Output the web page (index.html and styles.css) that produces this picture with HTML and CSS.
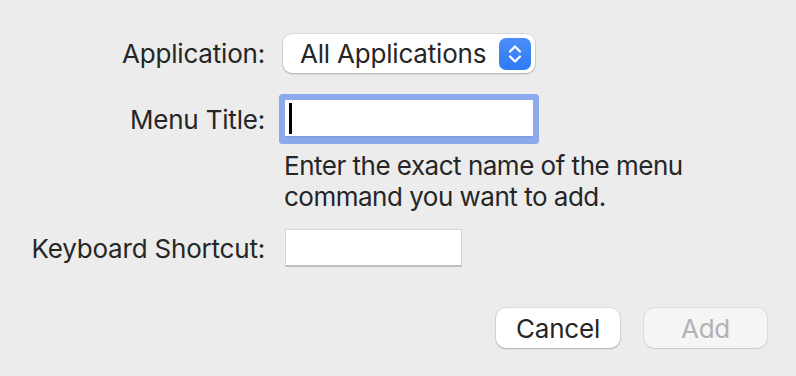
FILE: index.html
```html
<!DOCTYPE html>
<html>
<head>
<meta charset="utf-8">
<link rel="stylesheet" href="styles.css">
</head>
<body>
<div class="dialog">
  <div class="form">
    <div class="label row1">Application:</div>
    <div class="control row1">
      <div class="popup">
        <span class="popup-text">All Applications</span>
        <span class="stepper">
          <svg width="32" height="32" viewBox="0 0 32 32">
            <path d="M11 13.5 L16 8.5 L21 13.5" fill="none" stroke="#fff" stroke-width="2.2" stroke-linecap="round" stroke-linejoin="round"/>
            <path d="M11 18.5 L16 23.5 L21 18.5" fill="none" stroke="#fff" stroke-width="2.2" stroke-linecap="round" stroke-linejoin="round"/>
          </svg>
        </span>
      </div>
    </div>

    <div class="label row2">Menu Title:</div>
    <div class="control row2">
      <div class="field focused"><span class="caret"></span></div>
    </div>

    <div class="help">Enter the exact name of the menu<br>command you want to add.</div>

    <div class="label row3">Keyboard Shortcut:</div>
    <div class="control row3">
      <div class="field short"></div>
    </div>
  </div>
  <div class="buttons">
    <div class="btn">Cancel</div>
    <div class="btn disabled">Add</div>
  </div>
</div>
</body>
</html>
```

FILE: styles.css
```css
html, body {
  margin: 0;
  padding: 0;
  background: #ececec;
}
body {
  width: 796px;
  height: 376px;
  overflow: hidden;
  font-family: Inter, "Noto Sans", sans-serif;
  font-size: 26px;
  letter-spacing: -0.2px;
  color: #262626;
}
.dialog {
  padding-top: 34px;
}
.form {
  display: grid;
  grid-template-columns: 265px 1fr;
  column-gap: 18px;
  align-items: center;
}
.label {
  text-align: right;
  line-height: 31px;
  white-space: nowrap;
}
.control {
  display: flex;
}
.row2 { margin-top: 27px; }
.row3 { margin-top: 17px; }
.popup {
  width: 252px;
  height: 39px;
  box-sizing: border-box;
  background: #fff;
  border-radius: 9px;
  box-shadow: 0 0 0 1px rgba(0,0,0,0.06), 0 1px 2px rgba(0,0,0,0.22);
  display: flex;
  align-items: center;
  justify-content: space-between;
  padding: 0 4px 0 17px;
}
.popup-text {
  line-height: 31px;
  white-space: nowrap;
}
.stepper {
  width: 32px;
  height: 32px;
  border-radius: 7px;
  background: linear-gradient(#4a8ef7, #2f79f5);
  display: flex;
}
.field {
  margin-left: 2px;
  width: 248px;
  height: 38px;
  box-sizing: border-box;
  background: #fff;
  border: 1px solid #d6d6d6;
  border-bottom: 2px solid #c0c0c0;
  display: flex;
  align-items: center;
}
.field.focused {
  border: none;
  border-bottom: 2px solid #7f9ee0;
  box-shadow: 0 0 0 6px #8aaaec;
  border-radius: 1px;
}
.field.short {
  width: 177px;
}
.caret {
  display: block;
  width: 3px;
  height: 31px;
  background: #000;
  margin-left: 4px;
}
.help {
  grid-column: 2;
  margin-top: 12px;
  margin-left: 1px;
  line-height: 31px;
  letter-spacing: -0.5px;
  white-space: nowrap;
}
.buttons {
  display: flex;
  justify-content: flex-end;
  gap: 24px;
  padding-right: 29px;
  margin-top: 41px;
}
.btn {
  width: 124px;
  height: 40px;
  box-sizing: border-box;
  border-radius: 10px;
  background: #fff;
  box-shadow: 0 0 0 1px rgba(0,0,0,0.06), 0 1px 2px rgba(0,0,0,0.22);
  display: flex;
  align-items: center;
  justify-content: center;
  line-height: 31px;
}
.btn.disabled {
  width: 123px;
  background: #f5f5f5;
  color: #b2b2b2;
  box-shadow: 0 0 0 1px rgba(0,0,0,0.06), 0 1px 1px rgba(0,0,0,0.08);
}
```
